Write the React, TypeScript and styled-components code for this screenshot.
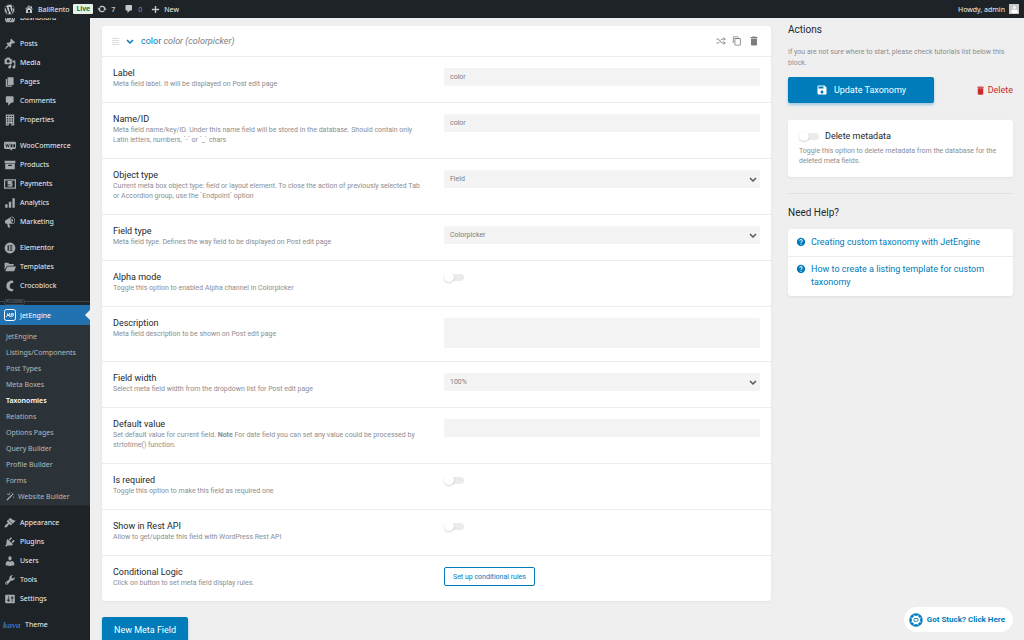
import React, { useState } from "react";
import styled, { createGlobalStyle, css } from "styled-components";
import { FaWordpress } from "react-icons/fa";
import { MdContentCopy, MdDelete, MdHelp, MdSave } from "react-icons/md";

const colors = {
  dark: "#1d2327",
  darkSub: "#2c3338",
  blue: "#2271b1",
  primary: "#007cba",
  page: "#efefef",
  heading: "#23282d",
  muted: "#8b8e91",
  border: "#ececec",
  danger: "#c92c2c",
};

const wpFont = '"Noto Sans", "Open Sans", sans-serif';

const GlobalStyle = createGlobalStyle`
  * { box-sizing: border-box; }
  body {
    margin: 0;
    background: ${colors.page};
    font-family: Roboto, "Liberation Sans", sans-serif;
    font-size: 8px;
    color: ${colors.heading};
  }
  a { color: inherit; text-decoration: none; }
  button, input, select, textarea { font: inherit; }
  svg { display: block; flex: none; }
  h2, p, ul { margin: 0; padding: 0; }
  ul { list-style: none; }
`;

/* ---------- Shell ---------- */

const Shell = styled.div`
  display: flex;
  flex-direction: column;
  height: 100vh;
  overflow: hidden;
`;

const Body = styled.div`
  display: flex;
  flex: 1;
  min-height: 0;
`;

/* ---------- Admin bar ---------- */

const AdminBar = styled.header`
  display: flex;
  justify-content: space-between;
  align-items: center;
  flex: none;
  height: 18px;
  padding: 0 5px 0 4px;
  background: ${colors.dark};
  color: #f0f0f1;
  font-family: ${wpFont};
  font-size: 7px;
`;

const BarGroup = styled.nav`
  display: flex;
  align-items: center;
  gap: 9px;
`;

const BarItem = styled.a<{ $dim?: boolean }>`
  display: flex;
  align-items: center;
  gap: 4px;
  color: ${(p) => (p.$dim ? "#8c9196" : "#f0f0f1")};

  svg { color: #c3c8cc; }
`;

const LiveBadge = styled.span`
  padding: 0 3px;
  margin: 0 -5px;
  border-radius: 1px;
  background: #e6f2e8;
  color: #00701a;
  font-weight: 600;
  line-height: 10px;
`;

const Avatar = styled.span`
  display: grid;
  place-items: center;
  width: 10px;
  height: 10px;
  background: #c9c9c9;
  color: #fff;

  && svg { color: #fff; }
`;

/* ---------- Side menu ---------- */

const SideMenu = styled.nav`
  flex: none;
  width: 90px;
  overflow: hidden;
  background: ${colors.dark};
  color: #f0f0f1;
  font-family: ${wpFont};
  font-size: 7px;
`;

const MenuScroll = styled.div`
  margin-top: -10px;
`;

const MenuSection = styled.ul`
  margin-bottom: 7px;
`;

const MenuLink = styled.a<{ $current?: boolean }>`
  position: relative;
  display: flex;
  align-items: center;
  gap: 4px;
  height: 19px;
  padding-left: 4px;
  white-space: nowrap;

  svg { color: #a7aaad; }

  ${(p) =>
    p.$current &&
    css`
      height: 20px;
      background: ${colors.blue};
      color: #fff;
      svg { color: #fff; }
      &::after {
        content: "";
        position: absolute;
        right: 0;
        top: 5px;
        width: 5px;
        height: 10px;
        background: ${colors.page};
        clip-path: polygon(100% 0, 100% 100%, 0 50%);
      }
    `}
`;

const GroupDivider = styled.div`
  display: flex;
  align-items: center;
  height: 10px;
  margin-top: -7px;
  padding: 3px 0 0;

  &::before, &::after {
    content: "";
    width: 4px;
    height: 1px;
    background: #3c434a;
  }
  &::after { flex: 1; }
`;

const GroupTag = styled.span`
  padding: 0 1px;
  border: 1px solid #3c434a;
  border-radius: 2px;
  color: #787f86;
  font-size: 4px;
  line-height: 4px;
`;

const SubMenu = styled.ul`
  padding: 3px 0 1px;
  margin-bottom: 7px;
  background: ${colors.darkSub};
  border-bottom: 1px solid #23292e;
`;

const SubLink = styled.a<{ $active?: boolean }>`
  display: flex;
  align-items: center;
  gap: 3px;
  height: 16px;
  padding-left: 6px;
  color: ${(p) => (p.$active ? "#fff" : "#b4b9be")};
  font-weight: ${(p) => (p.$active ? 600 : 400)};
`;

const KavaMark = styled.span`
  width: 18px;
  margin-left: -1px;
  color: #3a74b8;
  font-family: "Liberation Serif", serif;
  font-size: 9px;
  font-style: italic;
  font-weight: 700;
`;

/* ---------- Main ---------- */

const Main = styled.main`
  flex: 1;
  min-width: 0;
  display: grid;
  grid-template-columns: minmax(0, 1fr) 225px;
  column-gap: 17px;
  align-items: start;
  padding: 8px 11px 0 12px;
  overflow: hidden;
`;

const Card = styled.section`
  background: #fff;
  border-radius: 3px;
  box-shadow: 0 1px 3px rgba(35, 40, 45, 0.07);
`;

const FieldHeader = styled.div`
  display: flex;
  align-items: center;
  height: 31px;
  padding: 0 11px 0 10px;
  border-bottom: 1px solid ${colors.border};
`;

const IconButton = styled.button<{ $color?: string }>`
  display: grid;
  place-items: center;
  padding: 0;
  border: 0;
  background: none;
  color: ${(p) => p.$color || "#7b7e81"};
  cursor: pointer;
`;

const FieldTitle = styled.div`
  display: flex;
  align-items: center;
  flex: 1;
  gap: 7px;
  font-size: 9px;
  color: ${colors.primary};

  em { color: #7b7e81; }
`;

const HeaderActions = styled.div`
  display: flex;
  gap: 6px;
`;

const Row = styled.div`
  display: grid;
  grid-template-columns: 1fr 1fr;
  column-gap: 15px;
  padding: 10px 11px 13px;
  border-bottom: 1px solid ${colors.border};

  &:last-child { border-bottom: 0; }
`;

const RowText = styled.div`
  padding-right: 5px;
`;

const RowLabel = styled.label`
  display: block;
  font-size: 9px;
  line-height: 12px;
`;

const Hint = styled.p`
  color: ${colors.muted};
  font-size: 7px;
  line-height: 10px;
`;

const Control = styled.div`
  display: flex;
  padding-top: 1px;
`;

const fieldStyle = css`
  display: block;
  width: 100%;
  height: 18px;
  padding: 0 6px;
  border: 0;
  border-radius: 1px;
  outline: 0;
  background-color: #f4f4f4;
  color: #7b7e81;
  font-size: 7px;
`;

const TextField = styled.input`
  ${fieldStyle}
`;

const TextArea = styled.textarea`
  ${fieldStyle}
  height: 30px;
  resize: none;
`;

const SelectWrap = styled.div`
  position: relative;
  width: 100%;

  svg {
    position: absolute;
    right: 3px;
    top: 6px;
    pointer-events: none;
  }
`;

const Select = styled.select`
  ${fieldStyle}
  appearance: none;
`;

const Toggle = styled.input`
  appearance: none;
  position: relative;
  flex: none;
  width: 20px;
  height: 10px;
  margin: 0;
  cursor: pointer;

  &::before {
    content: "";
    position: absolute;
    inset: 2px 0 1px 2px;
    border-radius: 4px;
    background: #ebebeb;
  }
  &::after {
    content: "";
    position: absolute;
    left: 0;
    top: 0;
    width: 10px;
    height: 10px;
    border-radius: 50%;
    background: #fff;
    box-shadow: 0 1px 2px rgba(35, 40, 45, 0.2);
  }
  &:checked::before { background: ${colors.primary}; }
  &:checked::after { left: 10px; }
`;

const OutlineButton = styled.button`
  height: 19px;
  padding: 0 8px;
  border: 1px solid ${colors.primary};
  border-radius: 2px;
  background: #fff;
  color: ${colors.primary};
  font-size: 7px;
`;

const PrimaryButton = styled.button<{ $wide?: boolean }>`
  display: flex;
  align-items: center;
  justify-content: center;
  gap: 6px;
  width: ${(p) => (p.$wide ? "146px" : "auto")};
  height: 26px;
  padding: 0 12px;
  border: 0;
  border-radius: 2px;
  background: ${colors.primary};
  color: #fff;
  font-size: 9px;
  box-shadow: 0 2px 3px rgba(0, 124, 186, 0.35);
`;

const AddField = styled.div`
  padding-top: 16px;
`;

/* ---------- Aside ---------- */

const Heading = styled.h2`
  font-size: 10px;
  font-weight: 400;
  line-height: 14px;
`;

const Intro = styled.p`
  padding: 10px 0 8px;
  color: ${colors.muted};
  font-size: 7px;
  line-height: 11px;
`;

const Aside = styled.aside`
  margin-top: -3px;
`;

const Buttons = styled.div`
  display: flex;
  align-items: center;
  justify-content: space-between;
  margin-bottom: 17px;
`;

const DeleteButton = styled(IconButton)`
  display: flex;
  gap: 2px;
  font-size: 9px;
`;

const DeleteCard = styled(Card)`
  padding: 11px;
`;

const ToggleLine = styled.label`
  display: flex;
  align-items: center;
  gap: 6px;
  padding-bottom: 5px;
  font-size: 9px;
  line-height: 10px;
`;

const Divider = styled.hr`
  margin: 16px 0 12px;
  border: 0;
  border-top: 1px solid #e1e1e1;
`;

const HelpCard = styled(Card)`
  margin-top: 9px;
`;

const HelpLink = styled.a`
  display: flex;
  gap: 5px;
  padding: 7px 8px;
  border-bottom: 1px solid ${colors.border};
  color: ${colors.primary};
  font-size: 9px;
  line-height: 13px;

  &:last-child { border-bottom: 0; padding-top: 6px; }
  svg { margin-top: 1px; }
`;

const StuckButton = styled.button`
  position: fixed;
  right: 11px;
  bottom: 8px;
  display: flex;
  align-items: center;
  gap: 4px;
  height: 25px;
  padding: 0 8px 0 5px;
  border: 0;
  border-radius: 13px;
  background: #fff;
  color: ${colors.primary};
  font-size: 8px;
  font-weight: 700;
`;

/* ---------- Icons ---------- */

const dash = {
  dashboard:
    "M3.76 17h12.48c1.34-1.63 2.01-3.39 2.01-5.75 0-4.55-3.69-8.25-8.25-8.25s-8.25 3.7-8.25 8.25c0 2.36.67 4.12 2.01 5.75zM10 4c.55 0 1 .45 1 1s-.45 1-1 1-1-.45-1-1 .45-1 1-1zM4 10c.55 0 1 .45 1 1s-.45 1-1 1-1-.45-1-1 .45-1 1-1zm12 0c.55 0 1 .45 1 1s-.45 1-1 1-1-.45-1-1 .45-1 1-1zM10 14l4-6-2.500 7z",
  home: "M16 8.5l1.53 1.53-1.06 1.06L10 4.600l-6.470 6.490-1.060-1.060L10 2.500l4 4v-2h2v4zm-6-2.460l6 5.990V18H4v-5.970zM12 17v-5H8v5h4z",
  update:
    "M10.2 3.28c3.53 0 6.43 2.61 6.92 6h2.08l-3.5 4-3.5-4h2.32c-.45-1.97-2.21-3.45-4.32-3.45-1.45 0-2.73.71-3.54 1.78L4.95 5.66C6.23 4.2 8.11 3.28 10.2 3.28zm-.4 13.44c-3.52 0-6.43-2.61-6.92-6H.8l3.5-4c1.17 1.33 2.33 2.67 3.5 4H5.48c.45 1.97 2.21 3.45 4.32 3.45 1.45 0 2.73-.71 3.54-1.78l1.71 1.95c-1.28 1.46-3.15 2.38-5.25 2.38z",
  plus: "M18 8.500v3h-6.500V18h-3v-6.500H2v-3h6.500V2h3v6.500z",
  comments: "M5 2h9c1.1 0 2 .9 2 2v7c0 1.1-.9 2-2 2h-2l-5 5v-5H5c-1.1 0-2-.9-2-2V4c0-1.1.9-2 2-2z",
  post: "M10.44 3.02l1.82-1.82 6.36 6.35-1.83 1.82c-1.05-.68-2.48-.57-3.41.36l-.75.75c-.92.93-1.04 2.35-.35 3.41l-1.83 1.82-2.41-2.41-2.8 2.79c-.42.42-3.38 2.71-3.8 2.29s1.86-3.39 2.28-3.81l2.79-2.79L4.1 9.36l1.83-1.82c1.05.69 2.48.57 3.4-.36l.75-.75c.93-.92 1.05-2.35.36-3.41z",
  media:
    "M13 11V4c0-.55-.45-1-1-1h-1.67L9 1H5L3.67 3H2c-.55 0-1 .45-1 1v7c0 .55.45 1 1 1h10c.55 0 1-.45 1-1zM7 4.5c1.38 0 2.5 1.12 2.5 2.5S8.38 9.5 7 9.5 4.5 8.38 4.5 7 5.62 4.5 7 4.5zM14 6h5v10.5c0 1.38-1.12 2.5-2.5 2.5S14 17.88 14 16.5s1.12-2.5 2.5-2.5c.17 0 .34.02.5.05V9h-3V6zm-4 8.05V13h2v3.5c0 1.38-1.12 2.5-2.5 2.5S7 17.88 7 16.5 8.12 14 9.5 14c.17 0 .34.02.5.05z",
  page: "M6 15V2h10v13H6zm-1 1h8v2H3V5h2v11z",
  building:
    "M3 1h14v18h-5v-3H8v3H3zM5 3v2h2V3zm4 0v2h2V3zm4 0v2h2V3zM5 7v2h2V7zm4 0v2h2V7zm4 0v2h2V7zM5 11v2h2v-2zm4 0v2h2v-2zm4 0v2h2v-2zM5 15v2h1v-2zm9 0v2h1v-2z",
  woo: "M2 3h16c1 0 2 1 2 2v8c0 1-1 2-2 2h-5l1 3-5-3H2c-1 0-2-1-2-2V5c0-1 1-2 2-2zm.500 3l1 6h1l1.500-3 1 3h1l1.500-6h-1l-1 4-1-3H5.500L4.500 10l-1-4zM11 7v5h3V7zm4.500 0v5h3V7z",
  products: "M1 3h18v4H1zm1 5h16v9H2zm5 1.500v2h6v-2z",
  payments:
    "M0 2h20v16H0zm2 2v12h16V4zM6 5h8v2h-2v1h2v6h-3v1H9v-1H6v-2h5v-1H6V6z",
  analytics: "M2 12h4v6H2zm6-4h4v10H8zm6-6h4v16h-4z",
  marketing:
    "M18.15 5.94c.46 1.62.38 3.22-.02 4.48-.42 1.28-1.26 2.18-2.3 2.48-.16.06-.26.06-.4.06-.06.02-.12.02-.18.02-.06.02-.14.02-.22.02h-6.8l2.22 5.5c.02.14-.06.26-.14.34-.08.1-.24.16-.34.16H6.95c-.1 0-.26-.06-.34-.16-.08-.08-.16-.2-.14-.34l-1-5.5H4.25l-.02-.02c-.5.06-1.08-.18-1.54-.62s-.88-1.08-1.06-1.88c-.24-.8-.2-1.56-.02-2.2.18-.62.58-1.08 1.06-1.3l.02-.02 9-5.4c.1-.06.18-.1.24-.16.06-.04.14-.08.24-.12.16-.08.28-.12.5-.18 1.04-.3 2.24.1 3.22.98s1.84 2.24 2.26 3.86zm-2.58 5.98h-.02c.4-.1.74-.34 1.04-.7.58-.7.86-1.76.86-3.04 0-.64-.1-1.3-.28-1.98-.34-1.36-1.02-2.5-1.78-3.24s-1.68-1.1-2.46-.88c-.82.22-1.4.96-1.7 2-.32 1.04-.28 2.36.06 3.72.38 1.36 1 2.5 1.8 3.24.78.74 1.62 1.1 2.48.88zm-2.54-7.08c.22-.04.42-.02.62.04.38.16.76.48 1.02 1s.42 1.2.42 1.78c0 .3-.04.56-.12.8-.18.48-.44.84-.86.94-.34.1-.8-.06-1.14-.4s-.64-.86-.78-1.5c-.18-.62-.12-1.24.02-1.72s.48-.84.82-.94z",
  elementor: "M10 1a9 9 0 1 0 0 18 9 9 0 0 0 0-18zM6 5.500h2v9H6zm3.500 0H14v2H9.500zm0 3.500H14v2H9.500zm0 3.500H14v2H9.500z",
  templates: "M1 3h6l2 2h7v3H5l-4 7zm4.500 6H20l-3 8H2z",
  crocoblock: "M14 1C8 1 4 5 4 10s4 9 10 9l2-3.500c-4 0-6.500-2-6.500-5.500S12 4.500 16 4.500L14.500 1z",
  wand: "M1 17L12 6l2 2L3 19zM13 5l2-2 2 2-2 2zM7 1h1.500v3H7zM5.500 5h3v1.500h-3zM16 10h1.500v3H16zM3 4h2v2H3zM11 1h1.500v2H11z",
  appearance:
    "M14.48 11.06L7.41 3.99l1.5-1.5c.5-.56 2.3-.47 3.51.32 1.21.8 1.43 1.28 2.91 2.1 1.18.64 2.45 1.26 4.45.85zm-.71.71L6.7 4.7 4.93 6.47c-.39.39-.39 1.02 0 1.41l1.06 1.06c.39.39.39 1.03 0 1.42-.6.6-1.43 1.11-2.21 1.69-.35.26-.7.53-1.01.84C1.43 14.23.4 16.08 1.4 17.07c.99 1 2.84-.03 4.18-1.36.31-.31.58-.66.85-1.02.57-.78 1.08-1.61 1.69-2.21.39-.39 1.02-.39 1.41 0l1.06 1.06c.39.39 1.02.39 1.41 0z",
  plugins:
    "M13.11 4.36L9.87 7.6 8 5.73l3.24-3.24c.35-.34 1.05-.2 1.56.32.52.51.66 1.21.31 1.55zm-8 1.77l.91-1.12 9.01 9.01-1.19.84c-.71.71-2.63 1.16-3.82 1.16H6.14L4.9 17.26c-.59.59-1.54.59-2.12 0-.59-.58-.59-1.53 0-2.12l1.24-1.24v-3.88c0-1.13.4-3.19 1.09-3.89zm7.26 3.97l3.24-3.24c.34-.35 1.04-.21 1.55.31.52.51.66 1.21.31 1.55l-3.24 3.25z",
  users:
    "M10 9.25c-2.27 0-2.73-3.44-2.73-3.44C7 4.02 7.82 2 9.97 2c2.16 0 2.98 2.02 2.71 3.81 0 0-.41 3.44-2.68 3.44zm0 2.57L12.72 10c2.39 0 4.52 2.33 4.52 4.53v2.49s-3.65 1.13-7.24 1.13c-3.65 0-7.24-1.13-7.24-1.13v-2.49c0-2.25 1.94-4.48 4.47-4.48z",
  tools:
    "M16.68 9.77c-1.34 1.34-3.3 1.67-4.95.99l-5.41 6.52c-.99.99-2.59.99-3.58 0s-.99-2.59 0-3.57l6.52-5.42c-.68-1.65-.35-3.61.99-4.95 1.28-1.28 3.12-1.62 4.72-1.06l-2.89 2.89 2.82 2.82 2.86-2.87c.53 1.58.18 3.39-1.08 4.65zM3.81 16.21c.4.39 1.04.39 1.43 0 .4-.4.4-1.04 0-1.43-.39-.4-1.03-.4-1.43 0-.39.39-.39 1.03 0 1.43z",
  settings:
    "M18 16V4c0-.55-.45-1-1-1H3c-.55 0-1 .45-1 1v12c0 .55.45 1 1 1h14c.55 0 1-.45 1-1zM8 11h1c.55 0 1 .45 1 1s-.45 1-1 1H8v1.5c0 .28-.22.5-.5.5s-.5-.22-.5-.5V13H6c-.55 0-1-.45-1-1s.45-1 1-1h1V5.5c0-.28.22-.5.5-.5s.5.22.5.5V11zm5-2h-1c-.55 0-1-.45-1-1s.45-1 1-1h1V5.5c0-.28.22-.5.5-.5s.5.22.5.5V7h1c.55 0 1 .45 1 1s-.45 1-1 1h-1v5.5c0 .28-.22.5-.5.5s-.5-.22-.5-.5V9z",
};

type IconName = keyof typeof dash;

const Icon = ({ name, size = 12 }: { name: IconName; size?: number }) => (
  <svg width={size} height={size} viewBox="0 0 20 20" fill="currentColor" fillRule="evenodd" aria-hidden="true">
    <path d={dash[name]} />
  </svg>
);

const JetIcon = () => (
  <svg width="12" height="12" viewBox="0 0 24 24" fill="none" stroke="currentColor" strokeWidth="2" aria-hidden="true">
    <rect x="1" y="1" width="22" height="22" rx="4" />
    <path d="M4 15c3 0 3-2 3-6M8 13c4 1 5-4 3-4s-2 6 1 6 3-3 4-6M14 10h6M15 15c3 0 3-3 5-3" />
  </svg>
);

const Chevron = ({ color }: { color: string }) => (
  <svg width="8" height="7" viewBox="0 0 8 7" fill="none" stroke={color} strokeWidth="1.500" aria-hidden="true">
    <path d="M1 2l3 3 3-3" />
  </svg>
);

const ShuffleIcon = () => (
  <svg width="10" height="8" viewBox="0 0 20 16" fill="none" stroke="currentColor" strokeWidth="1.800" aria-hidden="true">
    <path d="M1 4h3.500l7.500 8h6M1 12h3.500l2.500-2.700M9.500 6.700L12 4h6" />
    <path d="M15.500 1l3 3-3 3M15.500 9l3 3-3 3" />
  </svg>
);

const DragIcon = () => (
  <svg width="7" height="7" viewBox="0 0 7 7" stroke="#dcdcdc" aria-hidden="true">
    <path d="M0 .5h7M0 2.500h7M0 4.500h7M0 6.500h7" />
  </svg>
);

const LifeRing = () => (
  <svg width="14" height="14" viewBox="0 0 28 28" fill="none" stroke="currentColor" aria-hidden="true">
    <circle cx="14" cy="14" r="11" strokeWidth="5" />
    <path d="M3.500 9.500l5 2M3.500 18.500l5-2M24.500 9.500l-5 2M24.500 18.500l-5-2M9.500 3.500l2 5M18.500 3.500l-2 5M9.500 24.500l2-5M18.500 24.500l-2-5" stroke="#fff" strokeWidth="1.500" />
    <path d="M10 11h8v5h-4l-2 2v-2h-2z" strokeWidth="1.500" />
  </svg>
);

/* ---------- Data ---------- */

const sections: [string, IconName][][] = [
  [["Dashboard", "dashboard"]],
  [["Posts", "post"], ["Media", "media"], ["Pages", "page"], ["Comments", "comments"], ["Properties", "building"]],
  [["WooCommerce", "woo"], ["Products", "products"], ["Payments", "payments"], ["Analytics", "analytics"], ["Marketing", "marketing"]],
  [["Elementor", "elementor"], ["Templates", "templates"], ["Crocoblock", "crocoblock"]],
];

const lower: [string, IconName][] = [
  ["Appearance", "appearance"],
  ["Plugins", "plugins"],
  ["Users", "users"],
  ["Tools", "tools"],
  ["Settings", "settings"],
];

const subItems = [
  "JetEngine", "Listings/Components", "Post Types", "Meta Boxes", "Taxonomies", "Relations",
  "Options Pages", "Query Builder", "Profile Builder", "Forms", "Website Builder",
];

type Kind = "text" | "select" | "toggle" | "area" | "button";
interface Field { id: string; label: string; hint: React.ReactNode; kind: Kind; value?: string }

const fields: Field[] = [
  { id: "label", label: "Label", hint: "Meta field label. It will be displayed on Post edit page", kind: "text", value: "color" },
  { id: "name", label: "Name/ID", hint: "Meta field name/key/ID. Under this name field will be stored in the database. Should contain only Latin letters, numbers, `-` or `_` chars", kind: "text", value: "color" },
  { id: "object", label: "Object type", hint: "Current meta box object type: field or layout element. To close the action of previously selected Tab or Accordion group, use the `Endpoint` option", kind: "select", value: "Field" },
  { id: "type", label: "Field type", hint: "Meta field type. Defines the way field to be displayed on Post edit page", kind: "select", value: "Colorpicker" },
  { id: "alpha", label: "Alpha mode", hint: "Toggle this option to enabled Alpha channel in Colorpicker", kind: "toggle" },
  { id: "description", label: "Description", hint: "Meta field description to be shown on Post edit page", kind: "area" },
  { id: "width", label: "Field width", hint: "Select meta field width from the dropdown list for Post edit page", kind: "select", value: "100%" },
  { id: "default", label: "Default value", hint: <>Set default value for current field. <b>Note</b> For date field you can set any value could be processed by strtotime() function.</>, kind: "text", value: "" },
  { id: "required", label: "Is required", hint: "Toggle this option to make this field as required one", kind: "toggle" },
  { id: "rest", label: "Show in Rest API", hint: "Allow to get/update this field with WordPress Rest API", kind: "toggle" },
  { id: "logic", label: "Conditional Logic", hint: "Click on button to set meta field display rules.", kind: "button", value: "Set up conditional rules" },
];

const FieldControl = ({ field }: { field: Field }) => {
  const [on, setOn] = useState(false);
  switch (field.kind) {
    case "text":
      return <TextField id={field.id} type="text" defaultValue={field.value} />;
    case "area":
      return <TextArea id={field.id} />;
    case "select":
      return (
        <SelectWrap>
          <Select id={field.id} defaultValue={field.value}>
            <option>{field.value}</option>
          </Select>
          <Chevron color="#50575e" />
        </SelectWrap>
      );
    case "toggle":
      return <Toggle id={field.id} type="checkbox" checked={on} onChange={() => setOn(!on)} />;
    default:
      return <OutlineButton id={field.id} type="button">{field.value}</OutlineButton>;
  }
};

const MenuItem = ({ label, icon }: { label: string; icon: IconName }) => (
  <li>
    <MenuLink href="#">
      <Icon name={icon} />
      {label}
    </MenuLink>
  </li>
);

export default function App() {
  return (
    <>
      <GlobalStyle />
      <Shell>
        <AdminBar>
          <BarGroup>
            <BarItem href="#" aria-label="About WordPress"><FaWordpress size={11} /></BarItem>
            <BarItem href="#"><Icon name="home" size={10} />BaliRento</BarItem>
            <LiveBadge>Live</LiveBadge>
            <BarItem href="#"><Icon name="update" size={10} />7</BarItem>
            <BarItem href="#" $dim><Icon name="comments" size={10} />0</BarItem>
            <BarItem href="#"><Icon name="plus" size={9} />New</BarItem>
          </BarGroup>
          <BarItem href="#">
            Howdy, admin
            <Avatar><Icon name="users" size={9} /></Avatar>
          </BarItem>
        </AdminBar>

        <Body>
          <SideMenu>
            <MenuScroll>
              {sections.map((items) => (
                <MenuSection key={items[0][0]}>
                  {items.map(([label, icon]) => <MenuItem key={label} label={label} icon={icon} />)}
                </MenuSection>
              ))}
              <GroupDivider><GroupTag>PLUGINS</GroupTag></GroupDivider>
              <MenuLink href="#" $current><JetIcon />JetEngine</MenuLink>
              <SubMenu>
                {subItems.map((label) => (
                  <li key={label}>
                    <SubLink href="#" $active={label === "Taxonomies"}>
                      {label === "Website Builder" && <Icon name="wand" size={9} />}
                      {label}
                    </SubLink>
                  </li>
                ))}
              </SubMenu>
              <MenuSection>
                {lower.map(([label, icon]) => <MenuItem key={label} label={label} icon={icon} />)}
              </MenuSection>
              <MenuLink href="#"><KavaMark>kava</KavaMark>Theme</MenuLink>
            </MenuScroll>
          </SideMenu>

          <Main>
            <div>
              <Card>
                <FieldHeader>
                  <FieldTitle>
                    <DragIcon />
                    <IconButton type="button" aria-label="Collapse field"><Chevron color={colors.primary} /></IconButton>
                    <span>color <em>color (colorpicker)</em></span>
                  </FieldTitle>
                  <HeaderActions>
                    <IconButton type="button" aria-label="Shuffle"><ShuffleIcon /></IconButton>
                    <IconButton type="button" aria-label="Copy"><MdContentCopy size={10} /></IconButton>
                    <IconButton type="button" aria-label="Remove"><MdDelete size={12} /></IconButton>
                  </HeaderActions>
                </FieldHeader>
                {fields.map((field) => (
                  <Row key={field.id}>
                    <RowText>
                      <RowLabel htmlFor={field.id}>{field.label}</RowLabel>
                      <Hint>{field.hint}</Hint>
                    </RowText>
                    <Control><FieldControl field={field} /></Control>
                  </Row>
                ))}
              </Card>
              <AddField>
                <PrimaryButton type="button">New Meta Field</PrimaryButton>
              </AddField>
            </div>

            <Aside>
              <Heading>Actions</Heading>
              <Intro>If you are not sure where to start, please check tutorials list below this block.</Intro>
              <Buttons>
                <PrimaryButton type="button" $wide><MdSave size={12} />Update Taxonomy</PrimaryButton>
                <DeleteButton type="button" $color={colors.danger}><MdDelete size={11} />Delete</DeleteButton>
              </Buttons>
              <DeleteCard>
                <ToggleLine><Toggle type="checkbox" />Delete metadata</ToggleLine>
                <Hint>Toggle this option to delete metadata from the database for the deleted meta fields.</Hint>
              </DeleteCard>
              <Divider />
              <Heading>Need Help?</Heading>
              <HelpCard>
                <HelpLink href="#"><MdHelp size={10} />Creating custom taxonomy with JetEngine</HelpLink>
                <HelpLink href="#"><MdHelp size={10} />How to create a listing template for custom taxonomy</HelpLink>
              </HelpCard>
            </Aside>
          </Main>
        </Body>
      </Shell>
      <StuckButton type="button"><LifeRing />Got Stuck? Click Here</StuckButton>
    </>
  );
}
